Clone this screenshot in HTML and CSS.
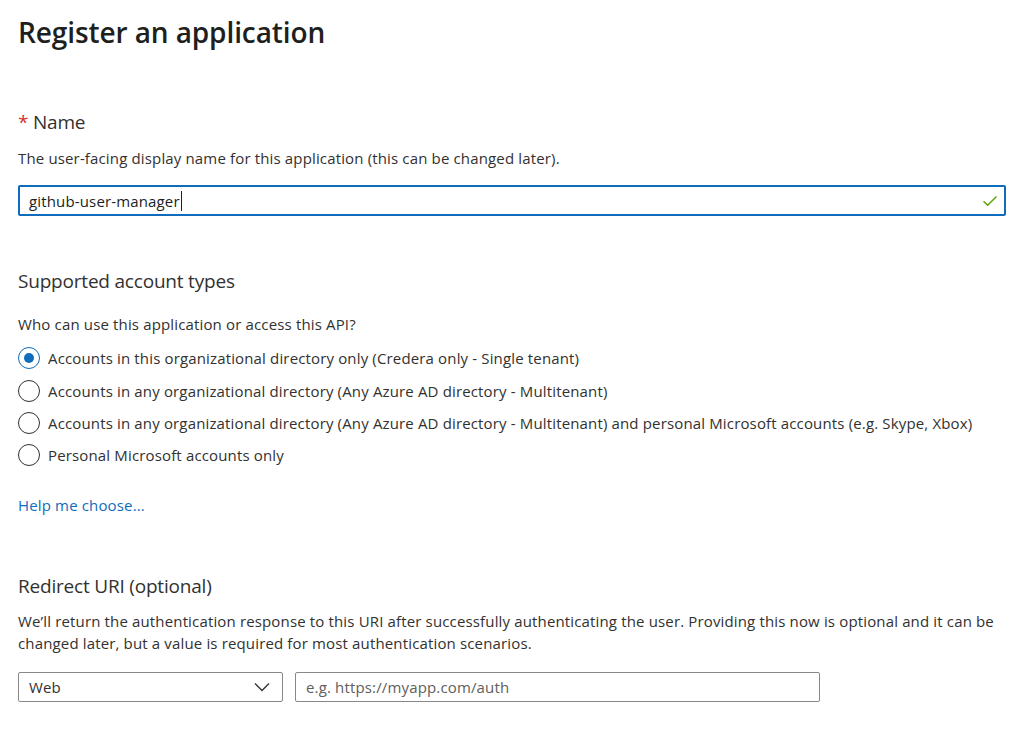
FILE: index.html
```html
<!DOCTYPE html>
<html lang="en">
<head>
<meta charset="utf-8">
<title>Register an application</title>
<link rel="stylesheet" href="styles.css">
</head>
<body>
<main class="page">
  <h1 class="title">Register an application</h1>

  <section class="section name-section">
    <div class="label"><span class="req">*</span> Name</div>
    <p class="desc">The user-facing display name for this application (this can be changed later).</p>
    <div class="textbox focused">
      <span class="value">github-user-manager</span><span class="caret"></span>
      <svg class="check" width="16" height="12" viewBox="0 0 16 12"><path d="M1.5 6.2 L5.6 10.2 L14.5 1.5" fill="none" stroke="#57a300" stroke-width="1.4"/></svg>
    </div>
  </section>

  <section class="section accounts-section">
    <div class="label">Supported account types</div>
    <p class="desc who">Who can use this application or access this API?</p>
    <div class="radios">
      <div class="radio-row"><span class="radio checked"></span><span>Accounts in this organizational directory only (Credera only - Single tenant)</span></div>
      <div class="radio-row"><span class="radio"></span><span>Accounts in any organizational directory (Any Azure AD directory - Multitenant)</span></div>
      <div class="radio-row"><span class="radio"></span><span>Accounts in any organizational directory (Any Azure AD directory - Multitenant) and personal Microsoft accounts (e.g. Skype, Xbox)</span></div>
      <div class="radio-row"><span class="radio"></span><span>Personal Microsoft accounts only</span></div>
    </div>
    <a class="link" href="#">Help me choose...</a>
  </section>

  <section class="section redirect-section">
    <div class="label">Redirect URI (optional)</div>
    <p class="desc para">We’ll return the authentication response to this URI after successfully authenticating the user. Providing this now is optional and it can be changed later, but a value is required for most authentication scenarios.</p>
    <div class="uri-row">
      <div class="select">
        <span>Web</span>
        <svg class="chev" width="16" height="10" viewBox="0 0 16 10"><path d="M1 1.5 L8 8.5 L15 1.5" fill="none" stroke="#323130" stroke-width="1.3"/></svg>
      </div>
      <div class="textbox uri"><span class="placeholder">e.g. https://myapp.com/auth</span></div>
    </div>
  </section>
</main>
</body>
</html>
```

FILE: styles.css
```css
* { box-sizing: border-box; }
html, body { margin: 0; padding: 0; background: #ffffff; }
body {
  font-family: "Open Sans", "Noto Sans", "Liberation Sans", sans-serif;
  color: #323130;
}
.page {
  padding: 14px 18px 0 18px;
  width: 1024px;
}
.title {
  margin: 0;
  font-size: 28px;
  font-weight: 600;
  line-height: 36px;
  letter-spacing: -0.1px;
  color: #201f1e;
}
.section { display: flex; flex-direction: column; }
.name-section { margin-top: 58px; }
.accounts-section { margin-top: 51px; }
.redirect-section { margin-top: 56px; }
.label {
  font-size: 19px;
  line-height: 28px;
  letter-spacing: -0.2px;
}
.req { color: #d13438; }
.desc {
  margin: 11px 0 0 0;
  font-size: 15px;
  line-height: 22px;
  letter-spacing: 0.15px;
}
.who { margin-top: 18px; }
.para { margin-top: 10px; }
.textbox {
  margin-top: 16px;
  height: 31px;
  width: 988px;
  border: 1px solid #8a8886;
  border-radius: 2px;
  display: flex;
  align-items: center;
  padding: 0 10px;
  font-size: 15px;
  letter-spacing: 0.15px;
}
.textbox.focused { border: 2px solid #0f6cbd; padding: 0 6px 0 9px; }
.value { color: #201f1e; }
.caret { display: inline-block; width: 1px; height: 20px; background: #201f1e; margin-left: 1px; }
.check { margin-left: auto; margin-right: 0; }
.radios { margin-top: 8px; display: flex; flex-direction: column; }
.radio-row {
  height: 32px;
  display: flex;
  align-items: center;
  gap: 8px;
  font-size: 15px;
  letter-spacing: 0.15px;
}
.radio-row:first-child { margin-top: -1px; margin-bottom: 1px; }
.radio {
  width: 22px;
  height: 22px;
  border-radius: 50%;
  border: 1px solid #323130;
  flex: none;
  position: relative;
}
.radio.checked { border-color: #0f6cbd; }
.radio.checked::after {
  content: "";
  position: absolute;
  left: 5px; top: 5px;
  width: 10px; height: 10px;
  border-radius: 50%;
  background: #0f6cbd;
}
.link {
  margin-top: 23px;
  font-size: 15px;
  line-height: 22px;
  letter-spacing: 0.15px;
  color: #0f6cbd;
  text-decoration: none;
  align-self: flex-start;
}
.uri-row { display: flex; gap: 12px; margin-top: 18px; }
.select {
  width: 265px;
  height: 30px;
  border: 1px solid #8a8886;
  border-radius: 2px;
  display: flex;
  align-items: center;
  padding: 0 12px 0 10px;
  font-size: 15px;
  letter-spacing: 0.15px;
}
.chev { margin-left: auto; }
.textbox.uri { margin-top: 0; width: 525px; height: 30px; }
.placeholder { color: #605e5c; }
```
